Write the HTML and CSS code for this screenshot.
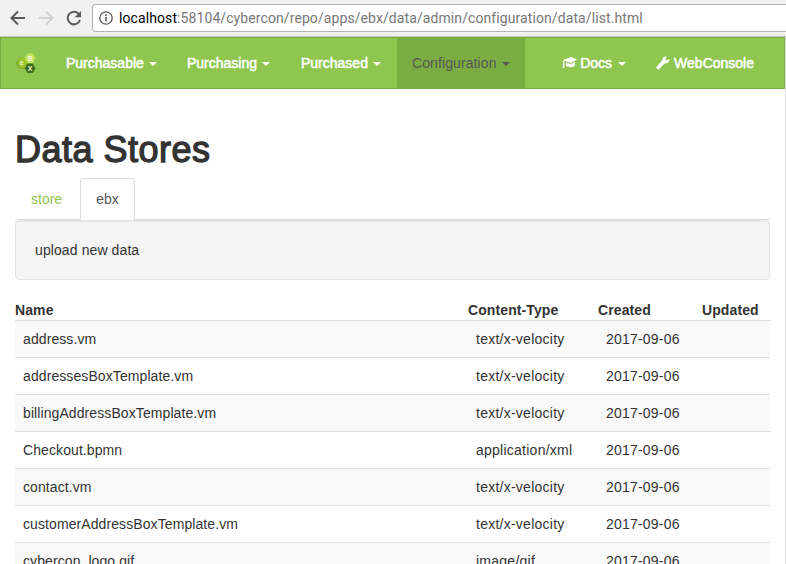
FILE: index.html
```html
<!DOCTYPE html>
<html lang="en">
<head>
<meta charset="utf-8">
<title>Data Stores</title>
<link rel="stylesheet" href="styles.css">
</head>
<body>
<header class="browser">
  <svg class="browser-nav" width="92" height="36" viewBox="0 0 92 36" fill="none" stroke-width="2">
    <path d="M25 18H12M18 11.5L11.5 18L18 24.5" stroke="#5a5a5a"/>
    <path d="M39 18H52M46 11.5L52.5 18L46 24.5" stroke="#d2d2d2"/>
    <path d="M79 14.2A6.3 6.3 0 1 0 80 20" stroke="#5a5a5a"/>
    <path d="M81 11v6.3h-6.3z" fill="#5a5a5a"/>
  </svg>
  <div class="address">
    <svg width="14" height="14" viewBox="0 0 14 14"><circle cx="7" cy="7" r="6.2" fill="none" stroke="#5a5a5a" stroke-width="1.3"/><path d="M6.2 6h1.6v4.6H6.2zM6.2 3.3h1.6v1.6H6.2z" fill="#5a5a5a"/></svg>
    <span class="url"><b>localhost</b>:58104/cybercon/repo/apps/ebx/data/admin/configuration/data/list.html</span>
  </div>
</header>
<div class="page">
  <nav class="navbar">
    <a class="brand">
      <svg width="20" height="21" viewBox="0 0 20 21">
        <path d="M0 10.5L3 5.5h5.5l3 5-3 5H3z" fill="#729524"/>
        <path d="M1 10L3.7 5.3h5L11.4 10l-2.7 4.7h-5z" fill="#9bc625"/>
        <path d="M8.8 5.2L11.5.5h5.3l2.7 4.7-2.7 4.9h-5.3z" fill="#c0e45c"/>
        <path d="M8.8 15.3l2.7-4.8h5.3l2.7 4.8-2.7 4.7h-5.3z" fill="#3b6d1d"/>
        <g class="logo-text" text-anchor="middle"><text x="5.7" y="12.3">e</text><text x="14.2" y="8">B</text><text x="14.2" y="18">X</text></g>
      </svg>
    </a>
    <a class="item purchasable">Purchasable<i class="caret"></i></a>
    <a class="item purchasing">Purchasing<i class="caret"></i></a>
    <a class="item purchased">Purchased<i class="caret"></i></a>
    <a class="item active">Configuration<i class="caret"></i></a>
    <div class="right">
      <a class="item docs"><svg width="16" height="14" viewBox="0 0 16 14" fill="#fff"><path d="M1 4.1L9 1l6.5 2.5L8.5 7z"/><path d="M4 6.2l4.5 2L13 5.8v3.4c-2 2.4-6.4 2.6-9 .8z"/><path d="M1.4 4.2h1L2.5 12H.6z"/></svg>Docs<i class="caret"></i></a>
      <a class="item console"><svg width="14" height="14" viewBox="0 0 14 14" fill="#fff"><path d="M13.4 2.7l-2.6 1.8-1.4-1.1L10.8.6C8.2-.1 5.8 1.8 6.2 4.5L.7 10.4c-1.3 1.6 1.1 4 2.8 2.7l5.1-5.7c2.8.8 5.4-1.9 4.8-4.7z"/></svg>WebConsole</a>
    </div>
  </nav>
  <main class="content">
    <h1>Data Stores</h1>
    <div class="tabs"><a class="tab">store</a><a class="tab selected">ebx</a></div>
    <div class="well">upload new data</div>
    <table>
      <colgroup><col class="name"><col class="type"><col class="created"><col></colgroup>
      <thead><tr><th>Name</th><th>Content-Type</th><th>Created</th><th>Updated</th></tr></thead>
      <tbody>
        <tr><td>address.vm</td><td>text/x-velocity</td><td>2017-09-06</td><td></td></tr>
        <tr><td>addressesBoxTemplate.vm</td><td>text/x-velocity</td><td>2017-09-06</td><td></td></tr>
        <tr><td>billingAddressBoxTemplate.vm</td><td>text/x-velocity</td><td>2017-09-06</td><td></td></tr>
        <tr><td>Checkout.bpmn</td><td>application/xml</td><td>2017-09-06</td><td></td></tr>
        <tr><td>contact.vm</td><td>text/x-velocity</td><td>2017-09-06</td><td></td></tr>
        <tr><td>customerAddressBoxTemplate.vm</td><td>text/x-velocity</td><td>2017-09-06</td><td></td></tr>
        <tr><td>cybercon_logo.gif</td><td>image/gif</td><td>2017-09-06</td><td></td></tr>
      </tbody>
    </table>
  </main>
</div>
</body>
</html>
```
FILE: styles.css
```css
* { box-sizing: border-box; }
body {
  margin: 0;
  height: 564px;
  overflow: hidden;
  background: #fff;
  color: #333;
  font: 14px/20px "Liberation Sans", Arial, sans-serif;
}
.browser {
  display: flex;
  height: 37px;
  background: #f1f1f1;
  border-bottom: 1px solid #c4c4c4;
}
.browser-nav { flex: none; }
.address {
  display: flex;
  align-items: center;
  flex: 1;
  height: 28px;
  margin-top: 4px;
  padding-left: 6px;
  gap: 6px;
  background: #fff;
  border: 1px solid #b3b3b3;
  border-right: 0;
  border-radius: 4px 0 0 4px;
}
.url {
  color: #777;
  font: 14px/20px Roboto, sans-serif;
  letter-spacing: .09px;
  white-space: nowrap;
}
.url b { color: #000; font-weight: 400; }
.page {
  height: 527px;
  border-right: 1px solid #ddd;
  overflow: hidden;
}
.navbar {
  display: flex;
  height: 52px;
  background: #8ec64f;
  border: 1px solid #7bae42;
}
.brand { width: 50px; padding: 15px 0 0 15px; }
.brand svg { display: block; }
.logo-text { fill: #f3f9dc; font-size: 7px; font-weight: 700; }
.item {
  display: flex;
  align-items: center;
  padding: 0 15px;
  color: #fff;
  -webkit-text-stroke: .5px #fff;
  white-space: nowrap;
}
.purchasable { width: 121px; }
.purchasing { width: 114px; }
.purchased { width: 111px; }
.active {
  width: 128px;
  background: #7bae42;
  color: #555;
  letter-spacing: .1px;
  -webkit-text-stroke: 0;
}
.caret {
  margin: 2px 0 0 5px;
  border: 4px solid transparent;
  border-top-color: currentColor;
  border-bottom: 0;
}
.right { display: flex; margin-left: auto; margin-right: 15px; }
.docs svg { margin-right: 2px; }
.docs .caret { margin-left: 6px; }
.console svg { margin-right: 4px; }
.content { padding: 0 15px; }
h1 {
  margin: 41px 0 8px;
  font-size: 36px;
  line-height: 40px;
  font-weight: 400;
  letter-spacing: .5px;
  -webkit-text-stroke: 1.3px #333;
}
.tabs {
  display: flex;
  height: 42px;
  border-bottom: 1px solid #ddd;
}
.tab {
  height: 42px;
  margin-right: 2px;
  padding: 11px 16px;
  color: #8ec64f;
}
.selected {
  background: #fff;
  color: #555;
  border: 1px solid #ddd;
  border-bottom-color: #fff;
  border-radius: 4px 4px 0 0;
  padding: 10px 15px;
}
.well {
  height: 60px;
  margin-bottom: 20px;
  padding: 19px;
  letter-spacing: .1px;
  background: #f4f4f4;
  border: 1px solid #e2e2e2;
  border-radius: 4px;
  box-shadow: inset 0 1px 1px rgba(0, 0, 0, .05);
}
table {
  width: 100%;
  table-layout: fixed;
  border-spacing: 0;
}
.name { width: 453px; }
.type { width: 130px; }
.created { width: 104px; }
th { padding: 0; text-align: left; letter-spacing: .1px; }
td { padding: 8px; height: 37px; border-top: 1px solid #ddd; letter-spacing: .09px; white-space: nowrap; }
td:nth-child(2) { letter-spacing: .25px; }
td:nth-child(3) { letter-spacing: .2px; }
tbody tr:nth-child(odd) { background: #f9f9f9; }
```
